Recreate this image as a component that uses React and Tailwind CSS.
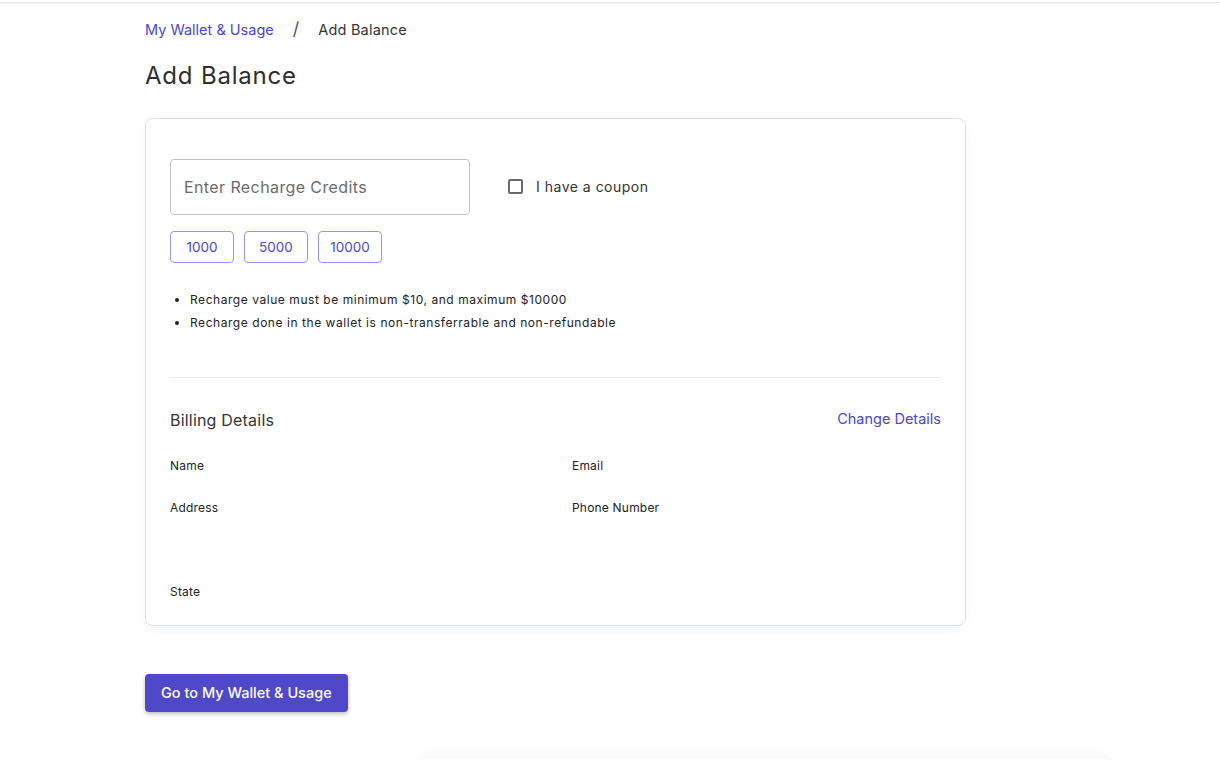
import { useState } from 'react';

const PRESETS = ['1000', '5000', '10000'];

const NOTES = [
    'Recharge value must be minimum $10, and maximum $10000',
    'Recharge done in the wallet is non-transferrable and non-refundable',
];

function Detail({ label }) {
    return <div className="text-[12px] text-[#222] leading-[18px] tracking-[0.2px]">{label}</div>;
}

export default function App() {
    const [amount, setAmount] = useState('');
    const [coupon, setCoupon] = useState(false);

    return (
        <div className="min-h-[760px] bg-white font-['Inter','Liberation_Sans',sans-serif] text-[#333] overflow-hidden">
            <div className="h-[3px] border-b border-[#e6e6e6] shadow-[0_1px_2px_rgba(0,0,0,0.06)]" />

            <div className="pl-[145px]">
                <nav className="flex items-center h-[50px] pt-[4px] text-[14.5px]">
                    <a className="text-[#4d47c9]">My Wallet &amp; Usage</a>
                    <span className="mx-[19px] text-[#555] text-[18px] -mt-[4px]">/</span>
                    <span className="text-[#333] tracking-[0.2px]">Add Balance</span>
                </nav>

                <h1 className="text-[24px] leading-[30px] mt-[8px] text-[#2e2e2e] tracking-[0.8px]">Add Balance</h1>

                <div className="mt-[27px] w-[821px] border border-[#d8e1e8] rounded-[8px] shadow-[0_4px_10px_rgba(0,0,0,0.04)] px-[24px] pt-[40px] pb-[24px]">
                    <div className="flex items-center">
                        <input
                            value={amount}
                            onChange={(e) => setAmount(e.target.value)}
                            placeholder="Enter Recharge Credits"
                            className="w-[300px] h-[56px] border border-[#c4c4c4] rounded-[4px] px-[13px] text-[16px] tracking-[0.4px] placeholder:text-[#6b6b6b] outline-none"
                        />
                        <label className="flex items-center ml-[38px] mb-[1px] cursor-pointer">
                            <span
                                onClick={() => setCoupon(!coupon)}
                                className={`w-[15px] h-[15px] border-2 rounded-[2px] ${coupon ? 'bg-[#4d47c9] border-[#4d47c9]' : 'border-[#6b6b6b]'}`}
                            />
                            <span className="ml-[13px] text-[14px] text-[#333] tracking-[0.5px]">I have a coupon</span>
                        </label>
                    </div>

                    <div className="flex gap-[10px] mt-[16px]">
                        {PRESETS.map((p) => (
                            <button
                                key={p}
                                onClick={() => setAmount(p)}
                                className="h-[32px] min-w-[64px] px-[10px] border border-[#9893ea] rounded-[4px] text-[13.5px] text-[#4d47c9]"
                            >
                                {p}
                            </button>
                        ))}
                    </div>

                    <ul className="mt-[25px] list-disc pl-[20px] text-[12px] leading-[23px] text-[#222] tracking-[0.55px]">
                        {NOTES.map((n) => <li key={n}>{n}</li>)}
                    </ul>

                    <div className="mt-[43px] border-t border-[#ebebeb]" />

                    <div className="flex justify-between items-start mt-[29px]">
                        <h2 className="text-[16px] leading-[24px] text-[#333] mt-[1px] tracking-[0.2px]">Billing Details</h2>
                        <a className="text-[14.5px] leading-[20px] mt-[2px] text-[#4d47c9]">Change Details</a>
                    </div>

                    <div className="grid grid-cols-[402px_1fr] mt-[25px]">
                        <div className="h-[42px]"><Detail label="Name" /></div>
                        <div className="h-[42px]"><Detail label="Email" /></div>
                        <div className="h-[84px]"><Detail label="Address" /></div>
                        <div className="h-[84px]"><Detail label="Phone Number" /></div>
                        <div><Detail label="State" /></div>
                    </div>
                </div>

                <button className="mt-[48px] h-[38px] px-[16px] bg-[#4f48c9] rounded-[4px] text-white text-[14.5px] font-medium shadow-[0_2px_4px_rgba(0,0,0,0.25)]">
                    Go to My Wallet &amp; Usage
                </button>
            </div>

            <div className="ml-[420px] mt-[46px] w-[690px] h-[40px] rounded-[8px] shadow-[0_-4px_14px_rgba(0,0,0,0.04)]" />
        </div>
    );
}
